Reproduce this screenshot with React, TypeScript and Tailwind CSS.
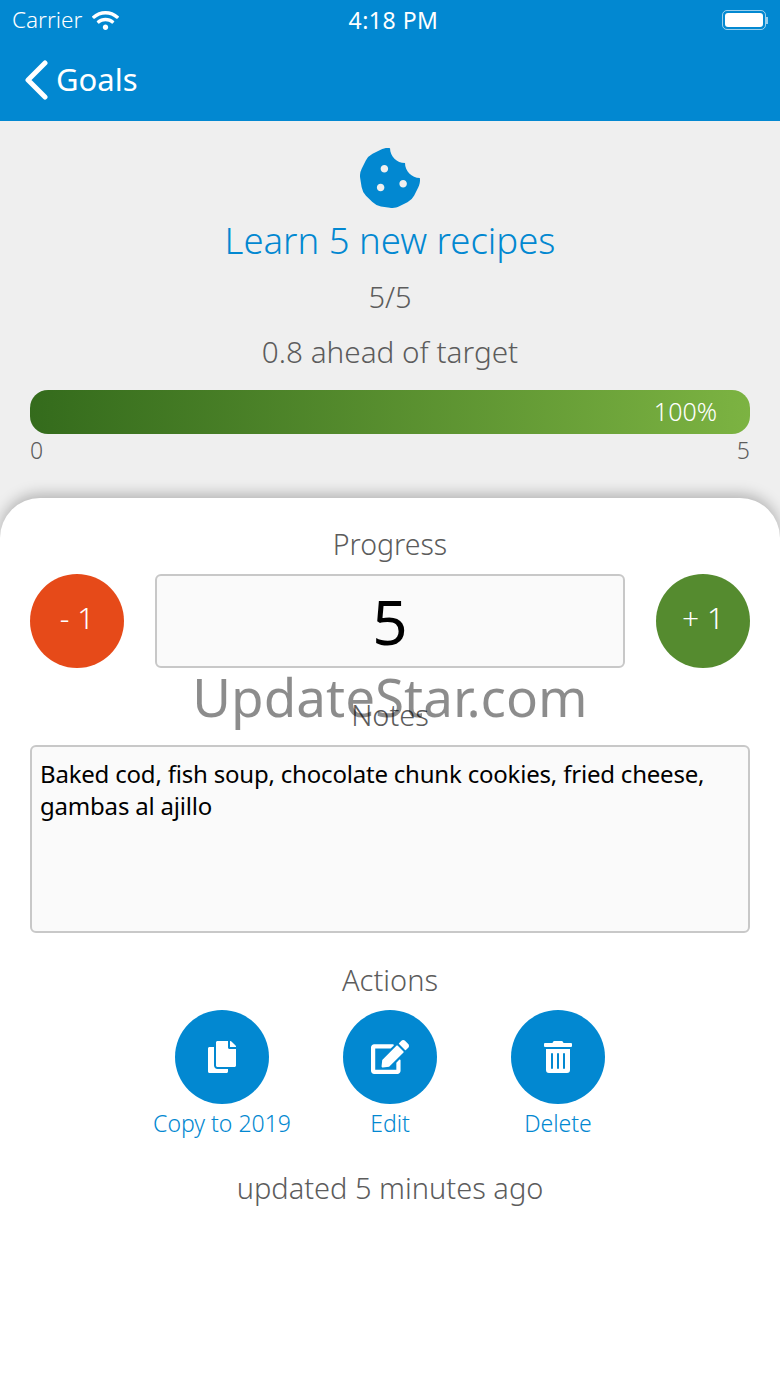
import React from "react";
import { FaCookieBite, FaCopy, FaEdit, FaTrashAlt, FaWifi } from "react-icons/fa";

const ActionButton: React.FC<{ icon: React.ReactNode; label: string }> = ({ icon, label }) => (
  <div className="flex w-[168px] flex-col items-center">
    <div className="flex h-[94px] w-[94px] items-center justify-center rounded-full bg-[#0288d1] text-white">{icon}</div>
    <span className="mt-[4px] text-[23px] leading-[30px] font-light text-[#0288d1]">{label}</span>
  </div>
);

export default function App() {
  return (
    <div className="relative flex h-[1387px] w-[780px] flex-col overflow-hidden bg-[#efefef] font-['Noto_Sans',sans-serif]">
      <header className="h-[121px] shrink-0 bg-[#0288d1] text-white">
        <div className="relative flex h-[40px] items-center justify-between pl-[12px] pr-3">
          <div className="flex items-center gap-[10px] text-[22.5px] font-light">
            <span>Carrier</span>
            <FaWifi className="text-[27px]" />
          </div>
          <span className="absolute left-[7px] right-0 text-center text-[23px] tracking-[0.5px]">4:18 PM</span>
          <div className="flex items-center">
            <div className="h-[20px] w-[44px] rounded-[5px] border border-white/60 p-[2px]">
              <div className="h-full w-full rounded-[3px] bg-white" />
            </div>
            <div className="h-[7px] w-[2px] bg-white/60" />
          </div>
        </div>
        <div className="flex h-[81px] items-center pb-[2px] pl-[24px]">
          <svg width="24" height="40" viewBox="0 0 24 40" fill="none" stroke="white" strokeWidth="5" strokeLinecap="round" strokeLinejoin="round">
            <path d="M21 3 L4 20 L21 37" />
          </svg>
          <span className="ml-[8px] text-[31px]">Goals</span>
        </div>
      </header>

      <section className="flex h-[377px] shrink-0 flex-col items-center px-[30px] pt-[27px]">
        <FaCookieBite className="h-[60px] w-[60px] text-[#0288d1]" />
        <h1 className="mt-[8px] text-[36.5px] leading-[48px] font-light text-[#0288d1]">Learn 5 new recipes</h1>
        <p className="mt-[15px] text-[29px] leading-[36px] font-light text-[#5c5c5c]">5/5</p>
        <p className="mt-[18px] text-[29.7px] leading-[38px] font-light text-[#5c5c5c]">0.8 ahead of target</p>
        <div className="mt-[19px] flex h-[44px] w-full items-center justify-end rounded-[18px] bg-gradient-to-r from-[#346b1c] to-[#7cb342] pr-[33px] text-[25px] font-light text-white">
          100%
        </div>
        <div className="mt-[1px] flex w-full justify-between text-[23px] leading-[30px] font-light text-[#5c5c5c]">
          <span>0</span>
          <span>5</span>
        </div>
      </section>

      <section className="flex flex-1 flex-col items-center rounded-t-[40px] bg-white px-[30px] pt-[27px] shadow-[0_-4px_14px_rgba(0,0,0,0.25)]">
        <h2 className="text-[28.5px] leading-[38px] font-light text-[#5c5c5c]">Progress</h2>
        <div className="mt-[11px] flex w-full items-center justify-between">
          <button className="flex h-[94px] w-[94px] items-center justify-center rounded-full bg-[#e64a19] pb-[7px] text-[30px] font-light text-white">- 1</button>
          <div className="flex h-[94px] w-[470px] items-center justify-center rounded-[6px] border-2 border-[#c8c8c8] bg-[#fafafa] text-[62px] text-black">5</div>
          <button className="flex h-[94px] w-[94px] items-center justify-center rounded-full bg-[#558b2f] pb-[7px] text-[30px] font-light text-white">+ 1</button>
        </div>
        <h2 className="mt-[28px] text-[29px] leading-[38px] font-light text-[#5c5c5c]">Notes</h2>
        <div className="mt-[11px] h-[188px] w-full rounded-[6px] border-2 border-[#c8c8c8] bg-[#fafafa] px-[8px] py-[11px] text-[24px] leading-[32px] tracking-[-0.2px] text-black">
          Baked cod, fish soup, chocolate chunk cookies, fried cheese, gambas al ajillo
        </div>
        <h2 className="mt-[28px] text-[29px] leading-[38px] font-light text-[#5c5c5c]">Actions</h2>
        <div className="mt-[11px] flex justify-center">
          <ActionButton icon={<FaCopy className="h-[32px] w-[32px]" />} label="Copy to 2019" />
          <ActionButton icon={<FaEdit className="h-[34px] w-[38px]" />} label="Edit" />
          <ActionButton icon={<FaTrashAlt className="h-[32px] w-[28px]" />} label="Delete" />
        </div>
        <p className="mt-[30px] text-[29px] leading-[40px] font-light text-[#5c5c5c]">updated 5 minutes ago</p>
      </section>

      <div className="pointer-events-none absolute left-0 right-0 top-[660px] text-center text-[53px] leading-[74px] text-black/45">UpdateStar.com</div>
    </div>
  );
}
